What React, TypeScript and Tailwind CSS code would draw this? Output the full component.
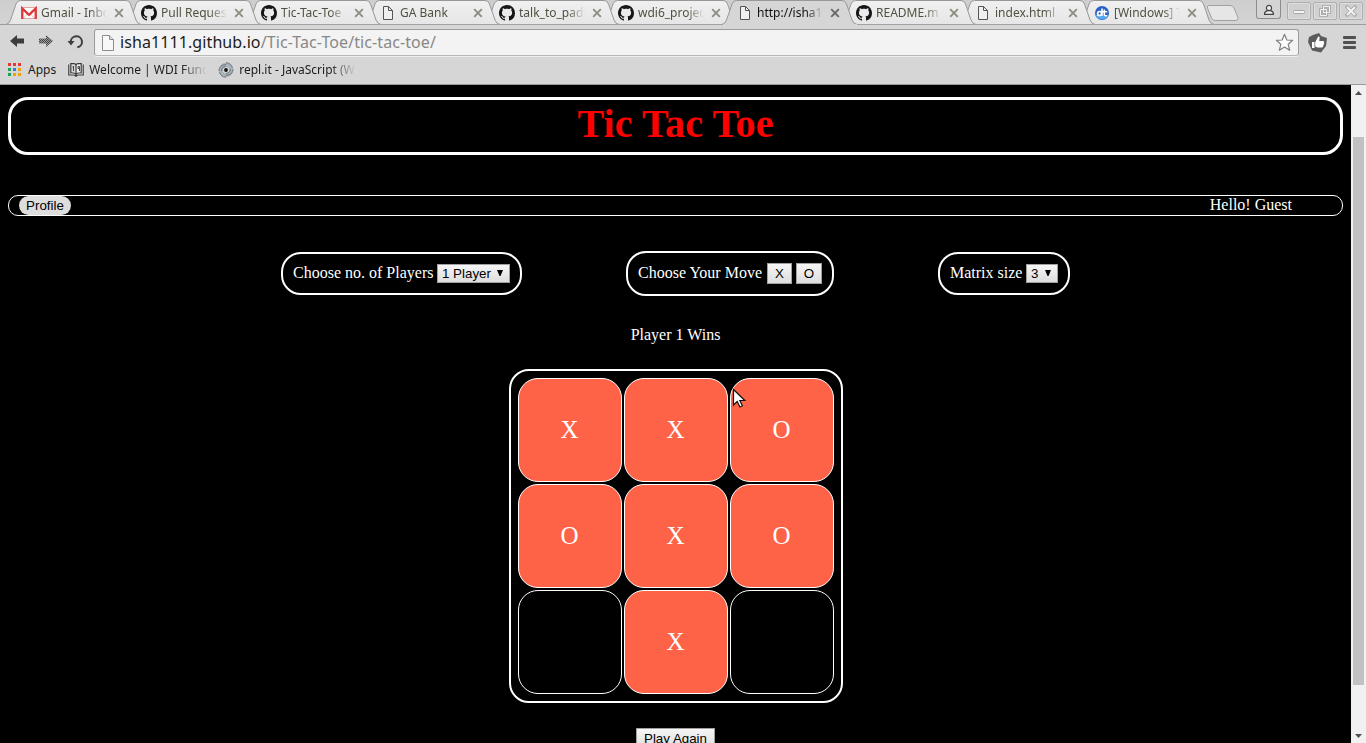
import { ReactNode } from "react";

type IconName = "gmail" | "github" | "page" | "dt";

const tabs: { icon: IconName; title: string; active?: boolean; z: string; width: string }[] = [
  { icon: "gmail", title: "Gmail - Inbo", z: "z-10", width: "w-[120px]" },
  { icon: "github", title: "Pull Reques", z: "z-9", width: "w-[120px]" },
  { icon: "github", title: "Tic-Tac-Toe", z: "z-8", width: "w-[119px]" },
  { icon: "page", title: "GA Bank", z: "z-7", width: "w-[119px]" },
  { icon: "github", title: "talk_to_pado", z: "z-6", width: "w-[119px]" },
  { icon: "github", title: "wdi6_projec", z: "z-5", width: "w-[119px]" },
  { icon: "page", title: "http://isha11", active: true, z: "z-20", width: "w-[119px]" },
  { icon: "github", title: "README.m", z: "z-4", width: "w-[119px]" },
  { icon: "page", title: "index.html", z: "z-3", width: "w-[119px]" },
  { icon: "dt", title: "[Windows] T", z: "z-2", width: "w-[119px]" },
];

function TabIcon({ name }: { name: IconName }) {
  if (name === "gmail")
    return (
      <svg width="16" height="16" viewBox="0 0 16 16">
        <rect x="0.5" y="2.500" width="15" height="11" fill="#fff" stroke="#e2a5a2" />
        <path d="M3 13 6.500 8.500M13 13 9.500 8.500" stroke="#e0c4c2" fill="none" />
        <path d="M1.300 14V3.400L8 9.800l6.700-6.400V14" fill="none" stroke="#dc3a3a" strokeWidth="2.300" />
      </svg>
    );
  if (name === "github")
    return (
      <svg width="16" height="16" viewBox="0 0 16 16" fill="#161616">
        <path
          fillRule="evenodd"
          d="M8 0C3.58 0 0 3.58 0 8c0 3.54 2.29 6.53 5.47 7.59.4.07.55-.17.55-.38 0-.19-.01-.82-.01-1.49-2.01.37-2.53-.49-2.69-.94-.09-.23-.48-.94-.82-1.13-.28-.15-.68-.52-.01-.53.63-.01 1.08.58 1.23.82.72 1.21 1.87.87 2.33.66.07-.52.28-.87.51-1.07-1.78-.2-3.64-.89-3.64-3.95 0-.87.31-1.59.82-2.15-.08-.2-.36-1.02.08-2.12 0 0 .67-.21 2.2.82.64-.18 1.32-.27 2-.27s1.36.09 2 .27c1.53-1.04 2.2-.82 2.2-.82.44 1.1.16 1.92.08 2.12.51.56.82 1.27.82 2.15 0 3.07-1.87 3.75-3.65 3.95.29.25.54.73.54 1.48 0 1.07-.01 1.93-.01 2.2 0 .21.15.46.55.38A8.01 8.01 0 0 0 16 8c0-4.420-3.580-8-8-8z"
        />
      </svg>
    );
  if (name === "page")
    return (
      <svg width="16" height="16" viewBox="0 0 16 16" fill="none" stroke="#555" strokeWidth="1">
        <path d="M3.500 1.500h5l4 4v9h-9z" fill="#f0f0f0" />
        <path d="M8.500 1.500v4h4" />
      </svg>
    );
  return (
    <svg width="16" height="16" viewBox="0 0 16 16">
      <circle cx="8" cy="8" r="7" fill="#2a62c4" />
      <path d="M1.500 10a7 7 0 0 0 13 0z" fill="#52a9ee" />
      <circle cx="5.600" cy="8.500" r="2" fill="none" stroke="#fff" strokeWidth="1.700" />
      <path d="M8 3.500v7.300M10.300 4.500v5q0 1.300 1.300 1.300h1.400M8.800 6.800h4.400" fill="none" stroke="#fff" strokeWidth="1.600" />
    </svg>
  );
}

function Tab({ icon, title, active, z, width }: (typeof tabs)[number]) {
  return (
    <div className={`relative flex h-[25px] shrink-0 items-center pl-[15px] ${width} ${z}`}>
      <svg className="absolute top-0 left-0" width="136" height="25" viewBox="0 0 136 25">
        <defs>
          <linearGradient id="tabFill" x1="0" y1="0" x2="0" y2="1">
            <stop offset="0" stopColor="#f0f0f0" />
            <stop offset="1" stopColor="#e6e6e6" />
          </linearGradient>
        </defs>
        <path
          d="M0 24.500Q3 24 4.500 20L10 4Q11.200 .5 14.500 .5H120Q123.300 .5 124.500 4L130 20Q131.500 24 135 24.500"
          fill={active ? "#d6d6d6" : "url(#tabFill)"}
          stroke="#989898"
        />
        {active ? <path d="M1 24.500H135" stroke="#d6d6d6" strokeWidth="1.200" /> : <path d="M0 24.500H136" stroke="#a2a2a2" />}
      </svg>
      <div className="relative flex h-4 w-4 shrink-0">
        <TabIcon name={icon} />
      </div>
      <div
        className={`relative ml-1 w-[66px] shrink-0 overflow-hidden text-[12px] leading-[18px] whitespace-nowrap [mask-image:linear-gradient(to_right,black_74%,transparent_100%)] ${active ? "text-[#111]" : "text-[#4e5240]"}`}
      >
        {title}
      </div>
      <svg className="relative ml-[7px] shrink-0" width="10" height="10" viewBox="0 0 10 10">
        <path d="M1.200 1.200l7.600 7.600M8.800 1.200l-7.600 7.600" stroke={active ? "#666" : "#8c8e80"} strokeWidth="1.900" />
      </svg>
    </div>
  );
}

function WindowButton({ children }: { children: ReactNode }) {
  return (
    <div className="flex h-[18px] w-[24px] items-center justify-center rounded-[2px] border border-[#aeaeae] shadow-[inset_0_0_0_1px_#dedede]">
      {children}
    </div>
  );
}

function TabStrip() {
  return (
    <div className="flex h-[25px] border-b border-[#9b9b9b] bg-[linear-gradient(#cecece,#d4d4d4)] pl-[6px]">
      {tabs.map((t) => (
        <Tab key={t.title} {...t} />
      ))}
      <svg className="mt-[4px] ml-[8px] shrink-0" width="34" height="18" viewBox="0 0 34 18">
        <path d="M2.500 1.500H24Q27 1.500 28 4l4 9.500Q32.500 16.500 30 16.500H9Q6.500 16.500 5.500 14L1.500 4Q1 1.500 2.500 1.500z" fill="#e6e6e6" stroke="#a0a0a0" />
      </svg>
      <div className="mr-[3px] ml-auto flex gap-[2px]">
        <div className="mr-[4px] flex h-[19px] w-[25px] items-center justify-center rounded-b-[3px] border border-t-0 border-[#8d8d8d] bg-[#d4d4d4]">
          <svg className="mt-[2px]" width="12" height="12" viewBox="0 0 12 12" fill="#eee" stroke="#444" strokeWidth="1.200">
            <path d="M1.600 10.400V9.500Q1.600 7.500 4.500 6.600h3q2.900.9 2.900 2.900v.9z" />
            <circle cx="6" cy="4" r="2.600" />
          </svg>
        </div>
        <div className="mt-[2px] flex gap-[2px]">
          <WindowButton>
            <svg width="12" height="12" viewBox="0 0 12 12">
              <rect x="0.500" y="5.500" width="11" height="3" rx="1" fill="#f4f4f4" stroke="#a6a6a6" />
            </svg>
          </WindowButton>
          <WindowButton>
            <svg width="12" height="12" viewBox="0 0 12 12" fill="none">
              <path d="M4.500 1.500h6v6h-6zM1.500 4.500h6v6h-6z" stroke="#a6a6a6" strokeWidth="2.600" />
              <path d="M4.500 1.500h6v6h-6zM1.500 4.500h6v6h-6z" stroke="#f2f2f2" strokeWidth="1" />
            </svg>
          </WindowButton>
          <WindowButton>
            <svg width="12" height="12" viewBox="0 0 12 12">
              <path d="M2.300 2.300l7.400 7.400M9.700 2.300l-7.400 7.400" stroke="#a6a6a6" strokeWidth="3.600" strokeLinecap="square" />
              <path d="M2 2l8 8M10 2l-8 8" stroke="#f4f4f4" strokeWidth="2" />
            </svg>
          </WindowButton>
        </div>
      </div>
    </div>
  );
}

function Toolbar() {
  return (
    <div className="flex h-[34px] items-start pt-[4px] pl-[9px]">
      <svg className="mt-[5px]" width="16" height="14" viewBox="0 0 16 14">
        <path d="M1 7 8 1v3.500h7v5H8V13z" fill="#3c3c3c" />
      </svg>
      <svg className="mt-[5px] ml-[13px]" width="16" height="14" viewBox="0 0 16 14">
        <defs>
          <pattern id="dither" width="2" height="2" patternUnits="userSpaceOnUse">
            <rect width="2" height="2" fill="#9c9c9c" />
            <rect width="1" height="1" fill="#444" />
            <rect x="1" y="1" width="1" height="1" fill="#444" />
          </pattern>
        </defs>
        <path d="M15 7 8 1v3.500H1v5h7V13z" fill="url(#dither)" />
      </svg>
      <svg className="mt-[5px] ml-[13px]" width="17" height="16" viewBox="0 0 17 16">
        <path d="M3.800 8A5.600 5.600 0 1 1 10.300 13.300" fill="none" stroke="#3f3f3f" strokeWidth="2" />
        <path d="M.5 7h7L4 11.500z" fill="#3f3f3f" />
      </svg>
      <div className="ml-[10px] flex h-[27px] w-[1205px] items-center rounded-[3px] border border-[#9c9c9c] border-b-[#b8b8b8] bg-[#f3f3f3] pr-[4px] pl-[6px] shadow-[0_1px_0_#eee]">
        <svg width="14" height="16" viewBox="0 0 14 16">
          <path d="M1.500.5h7l4 4v11h-11z" fill="#f8f8f8" stroke="#8c8c8c" />
          <path d="M8.500.5v4h4" fill="#ddd" stroke="#8c8c8c" />
        </svg>
        <div className="-mt-px ml-[5px] text-[16px] leading-[22px] tracking-[0.09px] whitespace-nowrap text-[#888]">
          <span className="text-[#1c1c1c]">isha1111.github.io</span>/Tic-Tac-Toe/tic-tac-toe/
        </div>
        <svg className="ml-auto" width="19" height="19" viewBox="0 0 19 19">
          <path d="M9.500 1.300 11.800 7l5.900.3-4.500 4 1.500 6-5.200-3.300-5.200 3.300 1.500-6-4.500-4L7.200 7z" fill="#fff" stroke="#808080" strokeWidth="1.200" strokeLinejoin="round" />
        </svg>
      </div>
      <svg className="mt-[4px] ml-[9px]" width="20" height="20" viewBox="0 0 20 20">
        <path d="M5 2 11 0l2 3 6 2-1 8-5 6.500-9-2L0 9l1-5z" fill="#5c5c5c" />
        <path d="M4 9h2.500v6H4zM7.200 9.300l3-5.700q2-.2 1.300 2.400l-.3 2h4.300q1 .6.500 1.600.4 1-.3 1.700.2 1-.6 1.600 0 1.500-1.200 1.500H9.500l-2.300-.8z" fill="#fff" />
      </svg>
      <svg className="mt-[7px] ml-[15px]" width="13" height="14" viewBox="0 0 13 14">
        <path d="M1 0h11q1 0 1 1v1q0 1-1 1H1Q0 3 0 2V1q0-1 1-1zM1 5h11q1 0 1 1v1q0 1-1 1H1Q0 8 0 7V6q0-1 1-1zM1 10h11q1 0 1 1v1q0 1-1 1H1q-1 0-1-1v-1q0-1 1-1z" fill="#515151" />
      </svg>
    </div>
  );
}

function Bookmarks() {
  return (
    <div className="flex h-[26px] items-start border-b border-[#9a9a9a] pl-[8px] text-[12px] leading-[21px] whitespace-nowrap text-[#1c1c1c]">
      <svg className="mt-[4px]" width="13" height="13" viewBox="0 0 13 13">
        <path d="M0 0h3v3H0zM5 0h3v3H5zM10 0h3v3h-3z" fill="#e53935" />
        <path d="M0 5h3v3H0z" fill="#18a05e" />
        <path d="M5 5h3v3H5z" fill="#3579e8" />
        <path d="M10 5h3v3h-3z" fill="#f0a202" />
        <path d="M0 10h3v3H0z" fill="#18a05e" />
        <path d="M5 10h3v3H5zM10 10h3v3h-3z" fill="#f0a202" />
      </svg>
      <span className="ml-[7px]">Apps</span>
      <svg className="mt-[3px] ml-[12px]" width="16" height="16" viewBox="0 0 16 16">
        <path d="M.8 2.500V13h5.500L8 14.200 9.700 13h5.500V2.500M2.800 1.700h3Q8 1.800 8 3.500v9Q7 11 5.500 11H2.800zM13.200 1.700h-3Q8 1.800 8 3.500v9q1-1.500 2.500-1.500h2.700z" fill="#eee" stroke="#3a3a3a" strokeWidth="1.200" />
        <path d="M5.500 4v5M4.500 5h1M10 4.500h1.500v2H10v-2M11.500 6v3" fill="none" stroke="#444" />
      </svg>
      <span className="ml-[5px] w-[118px] overflow-hidden [mask-image:linear-gradient(to_right,black_78%,transparent_100%)]">
        Welcome | WDI Func
      </span>
      <svg className="mt-[3px] ml-[11px]" width="16" height="16" viewBox="0 0 16 16" fill="none">
        <circle cx="8" cy="8" r="5.200" stroke="#a9b2b8" strokeWidth="4" />
        <path d="M1 9Q1 3 8 2.500M15 7q0 6-7 6.500M8 .8q5 0 6.500 5M8 15.200q-5 0-6.500-5M3.600 9Q3.500 4.800 8 4.600M12.400 7q0 4.200-4.400 4.400" stroke="#6b777f" />
        <circle cx="8" cy="8" r="1.900" fill="#111" />
      </svg>
      <span className="ml-[5px] w-[117px] overflow-hidden [mask-image:linear-gradient(to_right,black_78%,transparent_100%)]">
        repl.it - JavaScript (W
      </span>
    </div>
  );
}

const control =
  "inline-flex items-center border border-[#a0a0a0] bg-[linear-gradient(#f6f6f6,#dddddd)] font-['Liberation_Sans',sans-serif] text-[13.333px] text-black";

function Select({ value, size }: { value: string; size: string }) {
  return (
    <div className={`${control} ${size} h-[19px] justify-between pr-[6px] pl-[4px] leading-[17px]`}>
      {value}
      <svg className="-mt-px" width="6" height="6" viewBox="0 0 6 6">
        <path d="M0 0h6L3.500 6h-1z" fill="#000" />
      </svg>
    </div>
  );
}

function Group({ label, size, children }: { label: string; size: string; children: ReactNode }) {
  return (
    <div className={`flex items-center justify-between rounded-[20px] border-2 border-white px-[10px] ${size}`}>
      <span className="mb-[2px] whitespace-nowrap">{label}</span>
      {children}
    </div>
  );
}

const cells = ["X", "X", "O", "O", "X", "O", "", "X", ""];

function Game() {
  return (
    <div className="flex min-w-0 flex-1 flex-col overflow-hidden bg-black px-[8px] pt-[12px] font-['Liberation_Serif',serif] text-[16px] leading-[18px] text-white">
      <h1 className="h-[58px] shrink-0 rounded-[20px] border-[3px] border-white text-center text-[40px] leading-[47px] font-bold tracking-[0.1px] text-[#f00]">
        Tic Tac Toe
      </h1>
      <div className="mt-[40px] flex h-[21px] shrink-0 items-center justify-between rounded-[10px] border border-white pr-[50px] pl-[10px]">
        <button className="h-[19px] w-[52px] rounded-[10px] bg-[#dddddd] font-['Liberation_Sans',sans-serif] text-[13.333px] leading-[19px] text-black">
          Profile
        </button>
        <span className="-mt-px">Hello! Guest</span>
      </div>
      <div className="mt-[35px] flex shrink-0 items-center justify-center gap-[104px]">
        <Group label="Choose no. of Players" size="h-[43px] w-[241px]">
          <Select value="1 Player" size="w-[73px]" />
        </Group>
        <Group label="Choose Your Move" size="h-[45px] w-[208px]">
          <div className="flex gap-[4px]">
            <button className={`${control} h-[21px] w-[25px] justify-center`}>X</button>
            <button className={`${control} h-[21px] w-[26px] justify-center`}>O</button>
          </div>
        </Group>
        <Group label="Matrix size" size="h-[43px] w-[132px]">
          <Select value="3" size="w-[32px]" />
        </Group>
      </div>
      <p className="mt-[30px] shrink-0 text-center">Player 1 Wins</p>
      <div className="mt-[25px] ml-[501px] grid h-[334px] w-[334px] shrink-0 grid-cols-3 gap-[2px] rounded-[20px] border-2 border-white p-[7px]">
        {cells.map((c, i) => (
          <div
            key={i}
            className={`flex h-[104px] items-center justify-center rounded-[20px] border border-white pr-[1px] text-[25px] leading-[28px] ${c ? "bg-[#ff6347]" : ""}`}
          >
            {c}
          </div>
        ))}
      </div>
      <button className={`${control} mt-[25px] ml-[628px] h-[21px] w-[79px] shrink-0 justify-center`}>Play Again</button>
    </div>
  );
}

function Scrollbar() {
  return (
    <div className="flex w-[15px] shrink-0 flex-col items-center bg-[#f1f1f1]">
      <svg className="mt-[6px] shrink-0" width="7" height="4" viewBox="0 0 7 4">
        <path d="M0 4 3.500 0 7 4z" fill="#505050" />
      </svg>
      <div className="mt-[42px] h-[548px] w-[11px] shrink-0 bg-[#c1c1c1]" />
      <svg className="mt-[49px] shrink-0" width="7" height="4" viewBox="0 0 7 4">
        <path d="M0 0 3.500 4 7 0z" fill="#505050" />
      </svg>
    </div>
  );
}

export default function App() {
  return (
    <div className="relative flex h-[743px] w-[1366px] flex-col overflow-hidden bg-[#d6d6d6] font-['Noto_Sans',sans-serif]">
      <TabStrip />
      <Toolbar />
      <Bookmarks />
      <div className="flex min-h-0 flex-1">
        <Game />
        <Scrollbar />
      </div>
      <svg className="absolute top-[388px] left-[732px] z-30" width="15" height="21" viewBox="0 0 15 21">
        <path d="M1.500 1.500v15.500l3.700-3.500 2.700 5.500 2.500-1.200-2.600-5.300h5z" fill="#fff" stroke="#111" strokeWidth="1.200" />
      </svg>
    </div>
  );
}
